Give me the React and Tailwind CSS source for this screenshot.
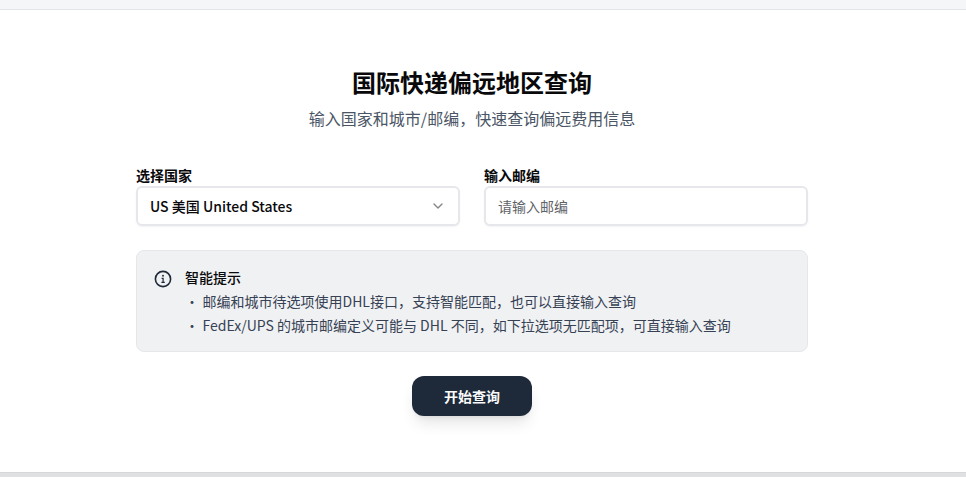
import { ChevronDown } from "lucide-react";

const TIPS = [
  "邮编和城市待选项使用DHL接口，支持智能匹配，也可以直接输入查询",
  "FedEx/UPS 的城市邮编定义可能与 DHL 不同，如下拉选项无匹配项，可直接输入查询",
];

function InfoIcon() {
  return (
    <svg viewBox="0 0 18 18" className="w-[18px] h-[18px] mt-[3px] shrink-0 text-gray-800" fill="none" stroke="currentColor">
      <circle cx="9" cy="9" r="7.6" strokeWidth="1.6" />
      <circle cx="9" cy="5.7" r="0.95" fill="currentColor" stroke="none" />
      <path d="M7.6 8.3H9.1V12.3M7.4 12.3H10.8" strokeWidth="1.2" />
    </svg>
  );
}

export default function App() {
  return (
    <div className="h-[477px] flex flex-col overflow-hidden bg-white font-['Noto_Sans_CJK_SC',sans-serif] text-[#09090b]">
      <div className="h-[10px] shrink-0 bg-[#f4f6f8] border-b border-[#e2e4e8]" />

      <main className="w-[672px] ml-[136px] pt-14 flex-1 flex flex-col">
        <header className="text-center">
          <h1 className="text-2xl leading-8 font-bold">国际快递偏远地区查询</h1>
          <p className="mt-2 text-base leading-6 text-gray-600">输入国家和城市/邮编，快速查询偏远费用信息</p>
        </header>

        <div className="mt-[33px] grid grid-cols-2 gap-6">
          <div>
            <label className="block h-[23px] leading-6 text-sm font-bold">选择国家</label>
            <button className="w-full h-10 flex items-center justify-between px-3 border-2 border-gray-200 rounded-md shadow-xs text-sm font-medium">
              <span>US 美国 United States</span>
              <ChevronDown size={16} strokeWidth={2} className="text-[#848487]" />
            </button>
          </div>
          <div>
            <label className="block h-[23px] leading-6 text-sm font-bold">输入邮编</label>
            <input
              className="block w-full h-10 px-3 border-2 border-gray-200 rounded-md shadow-xs text-sm placeholder:text-[#5f6368]"
              placeholder="请输入邮编"
            />
          </div>
        </div>

        <section className="mt-6 h-[102px] flex gap-[13px] pl-[17px] pr-4 pt-4 bg-[#f0f1f3] border border-gray-200 rounded-lg">
          <InfoIcon />
          <div className="-mt-0.5 text-sm">
            <p className="leading-6 font-medium">智能提示</p>
            <ul className="text-gray-700">
              {TIPS.map((tip) => (
                <li key={tip} className="leading-6 flex">
                  <span className="w-[17.5px]">•</span>
                  <span>{tip}</span>
                </li>
              ))}
            </ul>
          </div>
        </section>

        <button className="mt-6 mx-auto w-[120px] h-10 rounded-xl bg-gray-800 text-gray-50 text-sm font-bold shadow-lg">
          开始查询
        </button>
      </main>

      <div className="h-[5px] shrink-0 bg-[#dfe0e1] border-t border-[#d6d7d9]" />
    </div>
  );
}
